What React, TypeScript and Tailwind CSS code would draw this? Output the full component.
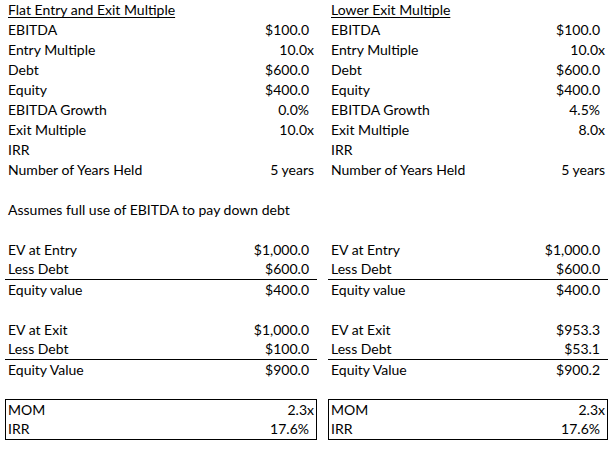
import React from "react";

type V = { t: string; k: "d" | "x" | "p" | "y" | "n" };

const pad = (k: V["k"]) =>
  k === "x" || k === "y" ? "pr-[3px]" : k === "n" ? "" : "pr-[8px]";

function Row({
  label,
  v,
  line,
  underline,
}: {
  label?: string;
  v?: V;
  line?: boolean;
  underline?: boolean;
}) {
  return (
    <div
      className={
        "flex h-[20px] items-end justify-between pb-[1px] leading-[18px] " +
        (line ? "border-b border-black" : "")
      }
    >
      <span className={"pl-[3px] whitespace-nowrap " + (underline ? "underline underline-offset-[2px]" : "")}>
        {label ?? ""}
      </span>
      {v ? <span className={"whitespace-nowrap " + pad(v.k)}>{v.t}</span> : null}
    </div>
  );
}

type Col = {
  title: string;
  inputs: [string, V | undefined][];
  note?: string;
  entry: [string, string, string];
  exit: [string, string, string];
  mom: string;
  irr: string;
};

function Column({ c, w }: { c: Col; w: string }) {
  return (
    <div className={"flex flex-col " + w}>
      <Row label={c.title} underline />
      {c.inputs.map(([l, v]) => (
        <Row key={l} label={l} v={v} />
      ))}
      <Row />
      <Row label={c.note} />
      <Row />
      <Row label="EV at Entry" v={{ t: c.entry[0], k: "d" }} />
      <Row label="Less Debt" v={{ t: c.entry[1], k: "d" }} line />
      <Row label="Equity value" v={{ t: c.entry[2], k: "d" }} />
      <Row />
      <Row label="EV at Exit" v={{ t: c.exit[0], k: "d" }} />
      <Row label="Less Debt" v={{ t: c.exit[1], k: "d" }} line />
      <Row label="Equity Value" v={{ t: c.exit[2], k: "d" }} />
      <div className="h-[19px]" />
      <div className="border border-black">
        <div className="flex h-[20px] items-end justify-between pb-[1px] leading-[18px]">
          <span className="pl-[2px]">MOM</span>
          <span className="pr-[2px]">{c.mom}</span>
        </div>
        <div className="flex h-[19px] items-end justify-between pb-[1px] leading-[18px]">
          <span className="pl-[2px]">IRR</span>
          <span className="pr-[7px]">{c.irr}</span>
        </div>
      </div>
    </div>
  );
}

const left: Col = {
  title: "Flat Entry and Exit Multiple",
  inputs: [
    ["EBITDA", { t: "$100.0", k: "d" }],
    ["Entry Multiple", { t: "10.0x", k: "x" }],
    ["Debt", { t: "$600.0", k: "d" }],
    ["Equity", { t: "$400.0", k: "d" }],
    ["EBITDA Growth", { t: "0.0%", k: "p" }],
    ["Exit Multiple", { t: "10.0x", k: "x" }],
    ["IRR", undefined],
    ["Number of Years Held", { t: "5 years", k: "y" }],
  ],
  note: "Assumes full use of EBITDA to pay down debt",
  entry: ["$1,000.0", "$600.0", "$400.0"],
  exit: ["$1,000.0", "$100.0", "$900.0"],
  mom: "2.3x",
  irr: "17.6%",
};

const right: Col = {
  title: "Lower Exit Multiple",
  inputs: [
    ["EBITDA", { t: "$100.0", k: "d" }],
    ["Entry Multiple", { t: "10.0x", k: "x" }],
    ["Debt", { t: "$600.0", k: "d" }],
    ["Equity", { t: "$400.0", k: "d" }],
    ["EBITDA Growth", { t: "4.5%", k: "p" }],
    ["Exit Multiple", { t: "8.0x", k: "x" }],
    ["IRR", undefined],
    ["Number of Years Held", { t: "5 years", k: "y" }],
  ],
  entry: ["$1,000.0", "$600.0", "$400.0"],
  exit: ["$953.3", "$53.1", "$900.2"],
  mom: "2.3x",
  irr: "17.6%",
};

export default function App() {
  return (
    <div
      className="h-[450px] w-[614px] overflow-hidden bg-white text-[14px] text-black"
      style={{ fontFamily: "Lato, 'Noto Sans', sans-serif" }}
    >
      <div className="flex gap-[11px] pl-[5px]">
        <Column c={left} w="w-[312px]" />
        <Column c={right} w="w-[280px]" />
      </div>
    </div>
  );
}
